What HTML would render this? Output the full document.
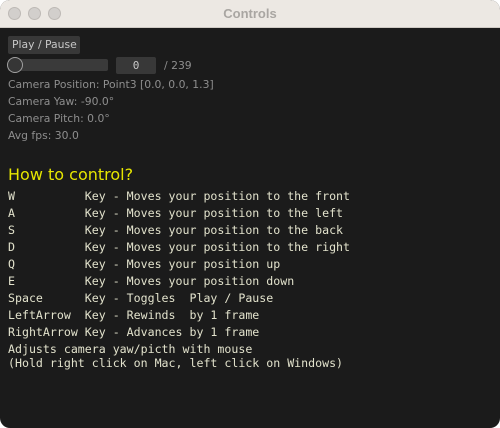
<!DOCTYPE html>
<html><head><meta charset="utf-8"><style>
*{margin:0;padding:0;box-sizing:border-box}
body{width:500px;height:428px;background:#fff;overflow:hidden;font-family:"DejaVu Sans","Liberation Sans",sans-serif}
.win{position:absolute;left:0;top:0;width:500px;height:428px;background:#1b1b1b;border-radius:10px;overflow:hidden}
.tb{position:absolute;left:0;top:0;width:500px;height:28px;background:#ece8e3;border-bottom:1px solid #cfcac4}
.dot{position:absolute;top:7px;width:13px;height:13px;border-radius:50%;background:#d2cfcc;border:1px solid #bdb9b5}
.title{position:absolute;left:0;width:500px;top:6px;text-align:center;font:bold 13px "Liberation Sans",sans-serif;color:#a9a6a2}
.t{position:absolute;left:8px;font-size:10.8px;color:#8e8e8e;white-space:pre}
.btn{position:absolute;left:8px;top:36px;width:72px;height:18px;background:#383838;border-radius:2px;color:#c8c8c8;font-size:10.8px;padding:2px 0 0 4px;white-space:nowrap}
.m{position:absolute;left:8px;font-family:"DejaVu Sans Mono","Liberation Mono",monospace;font-size:11.6px;color:#e2e2cc;white-space:pre;line-height:14px}
</style></head><body>
<div class="win">
<div class="tb"><div class="dot" style="left:8px"></div><div class="dot" style="left:28px"></div><div class="dot" style="left:48px"></div><div class="title">Controls</div></div>
<div class="btn">Play / Pause</div>
<div style="position:absolute;left:8px;top:59px;width:100px;height:12px;background:#3a3a3a;border-radius:2px"></div>
<div style="position:absolute;left:7px;top:57px;width:16px;height:16px;border-radius:50%;background:#363636;border:1.5px solid #a0a0a0"></div>
<div style="position:absolute;left:116px;top:57px;width:40px;height:17px;background:#383838;border-radius:2px;color:#c8c8c8;font-family:'DejaVu Sans Mono',monospace;font-size:11px;text-align:center;line-height:17px">0</div>
<div class="t" style="left:164px;top:59px">/ 239</div>
<div class="t" style="top:78px">Camera Position: Point3 [0.0, 0.0, 1.3]</div>
<div class="t" style="top:95px">Camera Yaw: -90.0°</div>
<div class="t" style="top:112px">Camera Pitch: 0.0°</div>
<div class="t" style="top:129px">Avg fps: 30.0</div>
<div class="t" style="top:165px;font-size:16px;color:#e6e600">How to control?</div>
<div class="m" style="top:189px">W          Key - Moves your position to the front</div>
<div class="m" style="top:206px">A          Key - Moves your position to the left</div>
<div class="m" style="top:223px">S          Key - Moves your position to the back</div>
<div class="m" style="top:240px">D          Key - Moves your position to the right</div>
<div class="m" style="top:257px">Q          Key - Moves your position up</div>
<div class="m" style="top:274px">E          Key - Moves your position down</div>
<div class="m" style="top:291px">Space      Key - Toggles  Play / Pause</div>
<div class="m" style="top:308px">LeftArrow  Key - Rewinds  by 1 frame</div>
<div class="m" style="top:325px">RightArrow Key - Advances by 1 frame</div>
<div class="m" style="top:342px">Adjusts camera yaw/picth with mouse
(Hold right click on Mac, left click on Windows)</div>
</div>
</body></html>
